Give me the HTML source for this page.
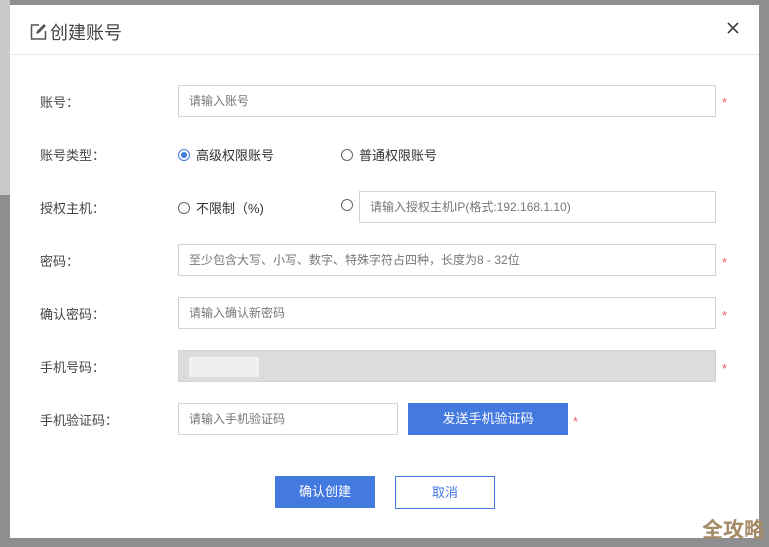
<!DOCTYPE html><html><head><meta charset="utf-8"><style>
body{margin:0;width:769px;height:547px;background:#8e8e90;position:relative;overflow:hidden;font-family:"Liberation Sans","Noto Sans CJK SC",sans-serif;font-size:13px;color:#333}
.bg{position:absolute;left:0;top:0;width:10px;height:195px;background:#c9c9c9}
.dlg{position:absolute;left:10px;top:5px;width:749px;height:533px;background:#fff}
.hd{position:absolute;left:0;top:0;right:0;height:49px;border-bottom:1px solid #e8e8e8}
.t{position:absolute;left:40px;top:14px;font-size:18px;color:#444}
.a{position:absolute}
.lb{position:absolute;left:30px;color:#444}
.in{position:absolute;border:1px solid #d2d2d2;box-sizing:border-box;height:32px;padding-left:10px;line-height:30px;color:#777;font-size:12px}
.st{position:absolute;color:#f05a6a;font-size:13px}
.r{display:inline-block;width:10px;height:10px;border:1px solid #666;border-radius:50%;vertical-align:-1px;margin-right:6px;position:relative}
.r.on{border-color:#4479e0}.r.on:after{content:"";position:absolute;left:2px;top:2px;width:6px;height:6px;border-radius:50%;background:#4479e0}
.btn{position:absolute;box-sizing:border-box;text-align:center;font-size:13px}
</style></head><body><div class="bg"></div>
<div class="dlg">
<div class="hd"><div class="t"><svg width="17" height="17" viewBox="0 0 17 17" style="position:absolute;left:-20px;top:4px"><path d="M9 2H1.5v14h14V8" fill="none" stroke="#555" stroke-width="1.5"/><path d="M6 11l1-3 7-7 2 2-7 7z" fill="#555"/></svg>创建账号</div>
<svg width="12" height="12" viewBox="0 0 12 12" style="position:absolute;left:717px;top:17px"><path d="M1 1L11 11M11 1L1 11" stroke="#444" stroke-width="1.6"/></svg></div>
<div class="lb" style="top:87px">账号：</div><div class="in" style="left:168px;top:80px;width:538px">请输入账号</div><div class="st" style="left:712px;top:90px">*</div>
<div class="lb" style="top:140px">账号类型：</div>
<div class="a" style="left:168px;top:140px"><span class="r on"></span>高级权限账号</div>
<div class="a" style="left:331px;top:140px"><span class="r"></span>普通权限账号</div>
<div class="lb" style="top:193px">授权主机：</div>
<div class="a" style="left:168px;top:193px"><span class="r"></span>不限制（%)</div>
<div class="a" style="left:331px;top:193px"><span class="r"></span></div>
<div class="in" style="left:349px;top:186px;width:357px">请输入授权主机IP(格式:192.168.1.10)</div>
<div class="lb" style="top:246px">密码：</div><div class="in" style="left:168px;top:239px;width:538px">至少包含大写、小写、数字、特殊字符占四种，长度为8 - 32位</div><div class="st" style="left:712px;top:250px">*</div>
<div class="lb" style="top:299px">确认密码：</div><div class="in" style="left:168px;top:292px;width:538px">请输入确认新密码</div><div class="st" style="left:712px;top:303px">*</div>
<div class="lb" style="top:352px">手机号码：</div><div class="in" style="left:168px;top:345px;width:538px;background:#dcdcdc"><span style="display:inline-block;width:70px;height:20px;background:#efefef;vertical-align:middle"></span></div><div class="st" style="left:712px;top:356px">*</div>
<div class="lb" style="top:405px">手机验证码：</div><div class="in" style="left:168px;top:398px;width:220px">请输入手机验证码</div>
<div class="btn" style="left:398px;top:398px;width:160px;height:32px;line-height:32px;background:#4479e0;color:#fff">发送手机验证码</div><div class="st" style="left:563px;top:409px">*</div>
<div class="btn" style="left:265px;top:471px;width:100px;height:32px;line-height:32px;background:#4479e0;color:#fff">确认创建</div>
<div class="btn" style="left:385px;top:471px;width:100px;height:33px;line-height:31px;border:1px solid #4479e0;color:#4479e0">取消</div>
</div>
<div class="a" style="left:702px;top:514px;font-size:21px;font-weight:bold;color:#a58a66">全攻略</div>
</body></html>
